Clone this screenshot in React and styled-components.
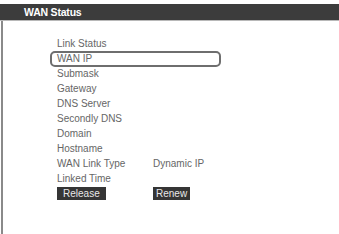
import React from "react";
import styled, { createGlobalStyle } from "styled-components";

const Global = createGlobalStyle`
  html, body { margin: 0; padding: 0; background: #fff; }
  body { font-family: "Liberation Sans", Arial, sans-serif; }
`;

const Page = styled.div`
  width: 339px;
  height: 234px;
  padding-top: 4px;
  box-sizing: border-box;
  display: flex;
  flex-direction: column;
`;

const Header = styled.div`
  height: 16px;
  background: #3c3c3c;
  border-bottom: 1px solid #b8b8b8;
  color: #fff;
  font-size: 10.5px;
  font-weight: bold;
  line-height: 16px;
  padding-left: 24px;
  letter-spacing: -0.2px;
`;

const Body = styled.div`
  flex: 1;
  margin-left: 1px;
  border-left: 2px solid #8a8a8a;
  padding: 15px 0 0 54px;
  display: flex;
  flex-direction: column;
`;

const Row = styled.div`
  display: flex;
  align-items: center;
  height: 15px;
  font-size: 10px;
  color: #666;
  position: relative;
`;

const Label = styled.span`
  width: 96px;
`;

const Value = styled.span``;

const Highlight = styled.div`
  position: absolute;
  left: -7px;
  top: 0px;
  width: 167px;
  height: 12px;
  border: 2px solid #6e6e6e;
  border-radius: 5px;
`;

const Button = styled.span`
  background: #353535;
  color: #e8e8e8;
  font-size: 10px;
  line-height: 13px;
  padding: 0 ${(p) => p.$pad}px;
  display: inline-block;
`;

const ButtonCell = styled.span`
  width: 96px;
`;

const rows = [
  ["Link Status", ""],
  ["WAN IP", "", true],
  ["Submask", ""],
  ["Gateway", ""],
  ["DNS Server", ""],
  ["Secondly DNS", ""],
  ["Domain", ""],
  ["Hostname", ""],
  ["WAN Link Type", "Dynamic IP"],
  ["Linked Time", ""],
];

export default function App() {
  return (
    <Page>
      <Global />
      <Header>WAN Status</Header>
      <Body>
        {rows.map(([label, value, boxed]) => (
          <Row key={label}>
            {boxed && <Highlight />}
            <Label>{label}</Label>
            <Value>{value}</Value>
          </Row>
        ))}
        <Row>
          <ButtonCell>
            <Button $pad={6}>Release</Button>
          </ButtonCell>
          <Button $pad={3}>Renew</Button>
        </Row>
      </Body>
    </Page>
  );
}
